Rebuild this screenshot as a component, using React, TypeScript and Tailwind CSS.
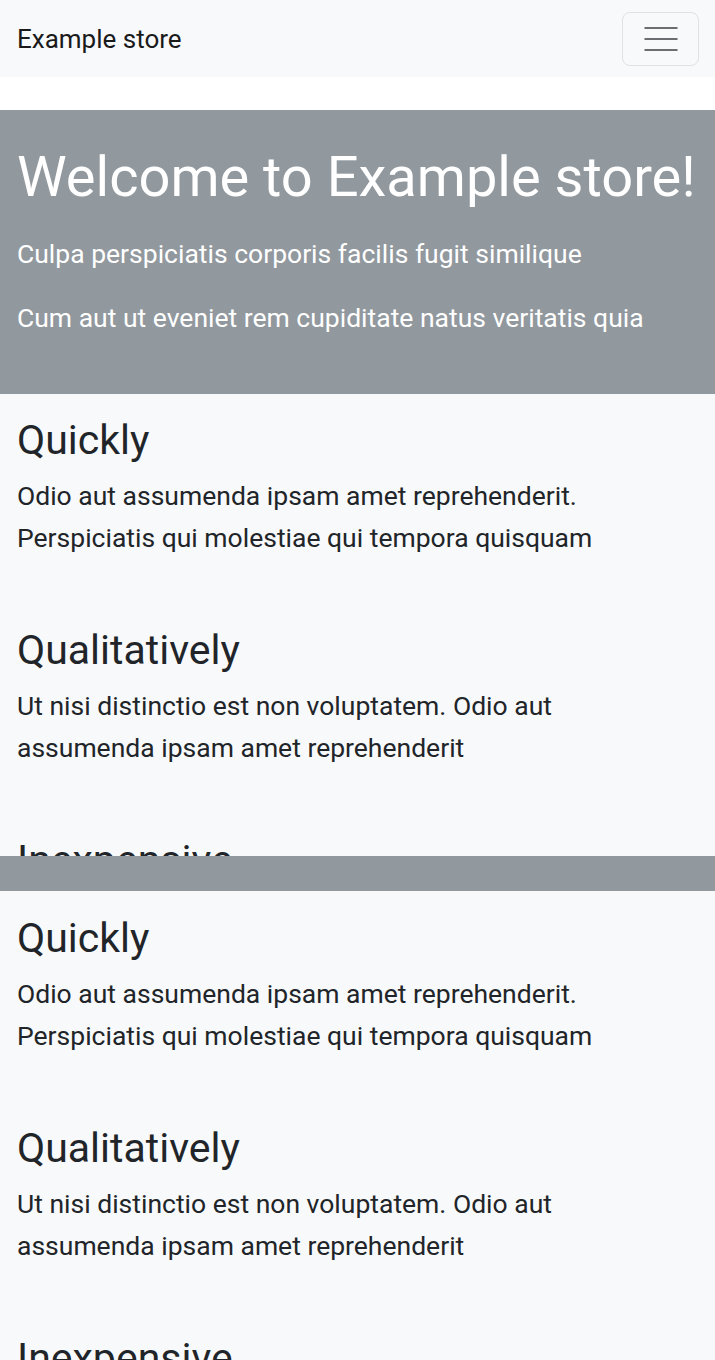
function Features() {
  const items = [
    { t: "Quickly", l1: "Odio aut assumenda ipsam amet reprehenderit.", l2: "Perspiciatis qui molestiae qui tempora quisquam" },
    { t: "Qualitatively", l1: "Ut nisi distinctio est non voluptatem. Odio aut", l2: "assumenda ipsam amet reprehenderit" },
    { t: "Inexpensive", l1: "Odio aut assumenda ipsam amet reprehenderit.", l2: "Perspiciatis qui molestiae qui tempora quisquam" },
  ];
  return (
    <section className="bg-[#f8f9fa] h-[462px] overflow-hidden px-[17px] pt-[22px] text-[#212529]">
      {items.map((it) => (
        <div key={it.t} className="mb-[67px]">
          <h2 className="text-[41px] leading-[48px] mb-[11px] font-normal">{it.t}</h2>
          <p className="text-[26.5px] leading-[42px]">
            {it.l1}
            <br />
            {it.l2}
          </p>
        </div>
      ))}
    </section>
  );
}

export default function App() {
  return (
    <div className="bg-white font-['Roboto',sans-serif] min-h-[1360px]">
      <nav className="bg-[#f8f9fa] h-[77px] flex items-center justify-between pl-[17px] pr-[16px]">
        <span className="text-[26px] text-[#1a1a1a] leading-none">Example store</span>
        <button className="w-[77px] h-[54px] rounded-[8px] border border-[#e0e1e2] flex items-center justify-center">
          <svg width="34" height="24" viewBox="0 0 34 24" fill="none">
            <path d="M0.5 1h33M0.5 12h33M0.5 23h33" stroke="#6b6d70" strokeWidth="2.2" />
          </svg>
        </button>
      </nav>
      <div className="h-[33px]" />
      <header className="bg-[#91989e] h-[284px] px-[17px] pt-[34px] text-white">
        <h1 className="text-[56px] leading-[67px] mb-[22px] font-normal whitespace-nowrap">Welcome to Example store!</h1>
        <p className="text-[26.5px] leading-[42px] mb-[22px]">Culpa perspiciatis corporis facilis fugit similique</p>
        <p className="text-[26.5px] leading-[42px]">Cum aut ut eveniet rem cupiditate natus veritatis quia</p>
      </header>
      <Features />
      <div className="bg-[#91989e] h-[35px]" />
      <section className="bg-[#f8f9fa] h-[469px] overflow-hidden px-[17px] pt-[23px] text-[#212529]">
        {[
          { t: "Quickly", l1: "Odio aut assumenda ipsam amet reprehenderit.", l2: "Perspiciatis qui molestiae qui tempora quisquam" },
          { t: "Qualitatively", l1: "Ut nisi distinctio est non voluptatem. Odio aut", l2: "assumenda ipsam amet reprehenderit" },
          { t: "Inexpensive", l1: "Odio aut assumenda ipsam amet reprehenderit.", l2: "Perspiciatis qui molestiae qui tempora quisquam" },
        ].map((it) => (
          <div key={it.t} className="mb-[67px]">
            <h2 className="text-[41px] leading-[48px] mb-[11px] font-normal">{it.t}</h2>
            <p className="text-[26.5px] leading-[42px]">
              {it.l1}
              <br />
              {it.l2}
            </p>
          </div>
        ))}
      </section>
    </div>
  );
}
